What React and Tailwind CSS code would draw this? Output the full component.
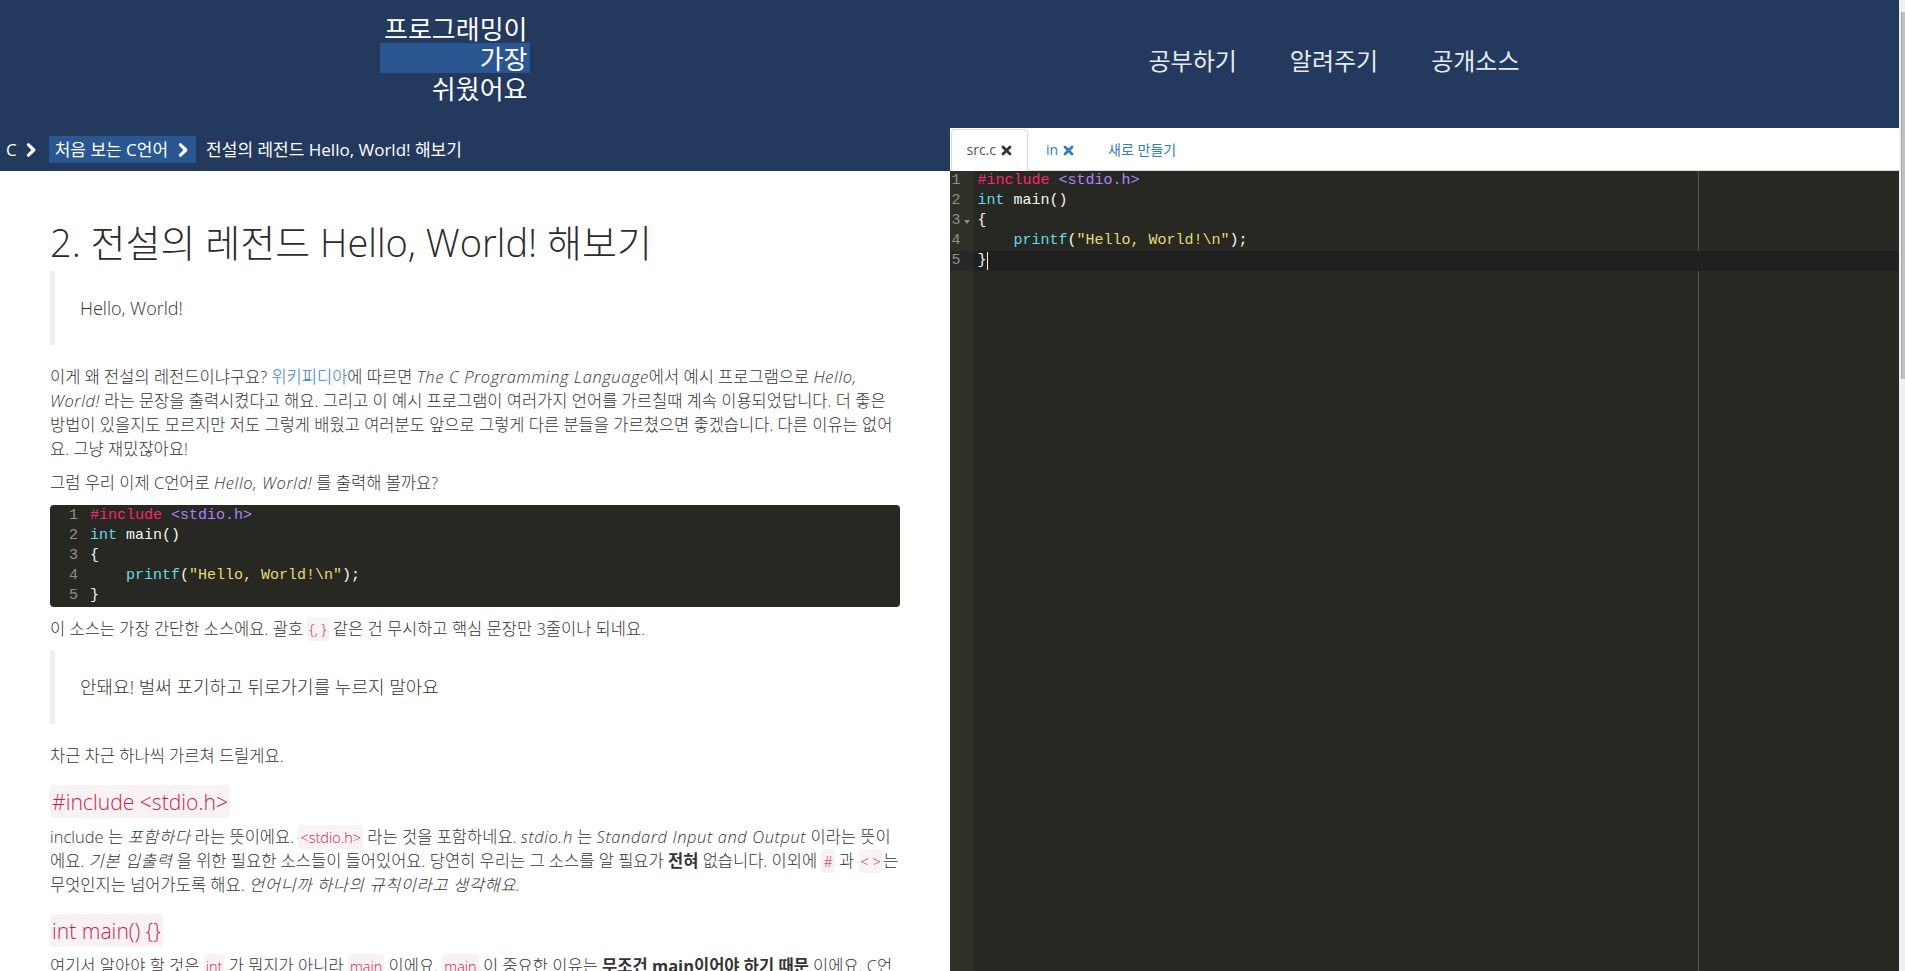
import React from 'react';

const codeLines = [
    [['#include', 'text-[#f92672]'], [' '], ['<stdio.h>', 'text-[#ae81ff]']],
    [['int', 'text-[#66d9ef]'], [' main()']],
    [['{']],
    [['    '], ['printf', 'text-[#66d9ef]'], ['('], ['"Hello, World!\\n"', 'text-[#e6db74]'], [');']],
    [['}']],
];

const Chevron = () => (
    <svg width="11" height="14" viewBox="0 0 11 14" className="shrink-0">
        <path d="M2.5 1.8 L7.8 7 L2.5 12.2" fill="none" stroke="white" strokeWidth="3.2" strokeLinecap="round" strokeLinejoin="round" />
    </svg>
);

const Times = ({ color }) => (
    <svg width="11" height="11" viewBox="0 0 11 11" className="shrink-0">
        <path d="M2 2 L9 9 M9 2 L2 9" stroke={color} strokeWidth="2.8" strokeLinecap="round" />
    </svg>
);

// inline code, same face as the text
const C = ({ children }) => (
    <span className="rounded-[4px] bg-[#f9f2f4] px-[2px] py-[2px] text-[88%] text-[#c7254e]">{children}</span>
);

const Em = ({ children }) => <em className="tracking-[0.6px]">{children}</em>;

const Line = ({ parts }) =>
    parts.map(([t, cls], j) => (
        <span key={j} className={cls}>
            {t}
        </span>
    ));

const Header = () => (
    <header className="h-[128px] shrink-0 bg-[#233a5e] font-['Noto_Sans_CJK_KR',sans-serif]">
        <div className="mx-auto flex w-[1140px] justify-between pt-[13px]">
            <div className="flex w-[150px] flex-col text-right text-[26px] leading-[30px] text-white">
                <div className="pr-[2px]">프로그래밍이</div>
                <div className="bg-[#2a5792] pr-[2px]">가장</div>
                <div className="pr-[2px]">쉬웠어요</div>
            </div>
            <nav className="flex h-[94px] items-center gap-[53px] text-[24px] text-[#e6e9ee]">
                <a href="#">공부하기</a>
                <a href="#">알려주기</a>
                <a href="#">공개소스</a>
            </nav>
        </div>
    </header>
);

const Article = () => (
    <div className="min-h-0 flex-1 overflow-hidden bg-white px-[50px] text-[16.5px] leading-[24px] font-light text-[#333]">
        <h2 className="mb-[9px] pt-[51px] text-[38px] leading-[40px] font-light text-[#2b2b2b]">
            2. 전설의 레전드 Hello, World! 해보기
        </h2>

        <blockquote className="mb-[20px] border-l-[5px] border-[#eee] px-[25px] py-[24px] text-[18px] leading-[26px]">
            Hello, World!
        </blockquote>

        <p className="mb-[10px]">
            이게 왜 전설의 레전드이냐구요? <a href="#" className="text-[#337ab7]">위키피디아</a>에 따르면{' '}
            <Em>The C Programming Language</Em>에서 예시 프로그램으로 <Em>Hello, World!</Em> 라는 문장을
            출력시켰다고 해요. 그리고 이 예시 프로그램이 여러가지 언어를 가르칠때 계속 이용되었답니다. 더 좋은 방법이
            있을지도 모르지만 저도 그렇게 배웠고 여러분도 앞으로 그렇게 다른 분들을 가르쳤으면 좋겠습니다. 다른 이유는
            없어요. 그냥 재밌잖아요!
        </p>
        <p className="mb-[10px]">
            그럼 우리 이제 C언어로 <Em>Hello, World!</Em> 를 출력해 볼까요?
        </p>

        <div className="mb-[10px] rounded-[4px] bg-[#272822] py-px font-['Liberation_Mono',monospace] text-[15px] font-normal tracking-normal">
            {codeLines.map((parts, i) => (
                <div key={i} className="flex h-[20px] leading-[20px]">
                    <span className="w-[28px] shrink-0 text-right text-[#8f908a]">{i + 1}</span>
                    <span className="pl-[12px] whitespace-pre text-[#f8f8f2]">
                        <Line parts={parts} />
                    </span>
                </div>
            ))}
        </div>

        <p className="mb-[10px]">
            이 소스는 가장 간단한 소스에요. 괄호 <C>{'{, }'}</C> 같은 건 무시하고 핵심 문장만 3줄이나 되네요.
        </p>

        <blockquote className="mb-[20px] border-l-[5px] border-[#eee] px-[25px] py-[24px] text-[18px] leading-[25px]">
            안돼요! 벌써 포기하고 뒤로가기를 누르지 말아요
        </blockquote>

        <p className="mb-[20px]">차근 차근 하나씩 가르쳐 드릴게요.</p>

        <h3 className="mb-[10px] text-[24px] leading-[26px] font-light">
            <C>#include &lt;stdio.h&gt;</C>
        </h3>
        <p className="mb-[20px]">
            include 는 <Em>포함하다</Em> 라는 뜻이에요. <C>&lt;stdio.h&gt;</C> 라는 것을 포함하네요. <Em>stdio.h</Em> 는{' '}
            <Em>Standard Input and Output</Em> 이라는 뜻이에요. <Em>기본 입출력</Em> 을 위한 필요한 소스들이
            들어있어요. 당연히 우리는 그 소스를 알 필요가 <strong className="font-bold">전혀</strong> 없습니다. 이외에{' '}
            <C>#</C> 과 <C>&lt; &gt;</C>는 무엇인지는 넘어가도록 해요. <Em>언어니까 하나의 규칙이라고 생각해요.</Em>
        </p>

        <h3 className="mb-[10px] text-[24px] leading-[26px] font-light">
            <C>int main() {'{}'}</C>
        </h3>
        <p className="mb-[10px]">
            여기서 알아야 할 것은 <C>int</C> 가 뭐지가 아니라 <C>main</C> 이에요. <C>main</C> 이 중요한 이유는{' '}
            <strong className="font-bold">무조건 main이어야 하기 때문</strong> 이에요. C언어로 만든 프로그램은 항상
            main 에서 시작하거든요.
        </p>
    </div>
);

const LeftPanel = () => (
    <div className="flex w-1/2 min-w-0 flex-col font-['Open_Sans','Noto_Sans_CJK_KR',sans-serif]">
        <div className="flex h-[43px] shrink-0 items-center bg-[#233a5e] pl-[6px] text-[17px] text-white">
            <span>C</span>
            <span className="ml-[9px]">
                <Chevron />
            </span>
            <div className="ml-[12px] flex h-[27px] items-center bg-[#2a5792] pr-[7px] pl-[6px]">
                <span>처음 보는 C언어</span>
                <span className="ml-[10px]">
                    <Chevron />
                </span>
            </div>
            <span className="ml-[10px]">전설의 레전드 Hello, World! 해보기</span>
        </div>
        <Article />
    </div>
);

const EditorPanel = () => (
    <div className="flex w-1/2 min-w-0 flex-col">
        {/* tabs */}
        <div className="flex h-[43px] shrink-0 items-end border-b border-[#ddd] bg-white pl-px font-['Open_Sans','Noto_Sans_CJK_KR',sans-serif] text-[14px] leading-[20px]">
            <a href="#" className="relative -mb-px mr-[2px] flex items-center gap-[5px] rounded-t-[4px] border border-[#ddd] border-b-white bg-white px-[15px] py-[10px] text-[#555]">
                src.c <Times color="#333" />
            </a>
            <a href="#" className="-mb-px mr-[2px] flex items-center gap-[5px] border border-transparent px-[15px] py-[10px] text-[#337ab7]">
                in <Times color="#337ab7" />
            </a>
            <a href="#" className="-mb-px flex items-center border border-transparent px-[15px] py-[10px] text-[#337ab7]">
                새로 만들기
            </a>
        </div>

        {/* editor */}
        <div className="flex min-h-0 flex-1 bg-[#272822] font-['Liberation_Mono',monospace] text-[15px] leading-[20px]">
            <div className="w-[24px] shrink-0 bg-[#2f3129] text-[#8f908a]">
                {codeLines.map((_, i) => (
                    <div key={i} className={`flex h-[20px] items-center pl-[2px] ${i === 4 ? 'bg-[#272727]' : ''}`}>
                        <span>{i + 1}</span>
                        {i === 2 && (
                            <svg width="6" height="4" viewBox="0 0 6 4" className="ml-[3px] mt-[2px]">
                                <path d="M0 0 L6 0 L3 4 Z" fill="#8f908a" />
                            </svg>
                        )}
                    </div>
                ))}
            </div>
            <div className="relative flex-1">
                <div className="absolute top-0 bottom-0 left-[724px] w-px bg-[#555651]" />
                {codeLines.map((parts, i) => (
                    <div
                        key={i}
                        className={`relative flex h-[20px] items-center pl-[4px] whitespace-pre text-[#f8f8f2] ${i === 4 ? 'bg-[#202020]' : ''}`}
                    >
                        <Line parts={parts} />
                        {i === 4 && <span className="h-[18px] w-px bg-[#f8f8f0]" />}
                    </div>
                ))}
            </div>
        </div>
    </div>
);

const App = () => {
    return (
        <div className="flex h-[971px] w-full overflow-hidden bg-white">
            <div className="flex min-w-0 flex-1 flex-col">
                <Header />
                <div className="flex min-h-0 flex-1">
                    <LeftPanel />
                    <EditorPanel />
                </div>
            </div>
            {/* page scrollbar */}
            <div className="w-[6px] shrink-0 bg-[#f0f0f0] pt-[12px] pl-[2px]">
                <div className="h-[367px] w-[4px] border-l border-[#a9a9a9] bg-[#c1c1c1]" />
            </div>
        </div>
    );
};

export default App;
